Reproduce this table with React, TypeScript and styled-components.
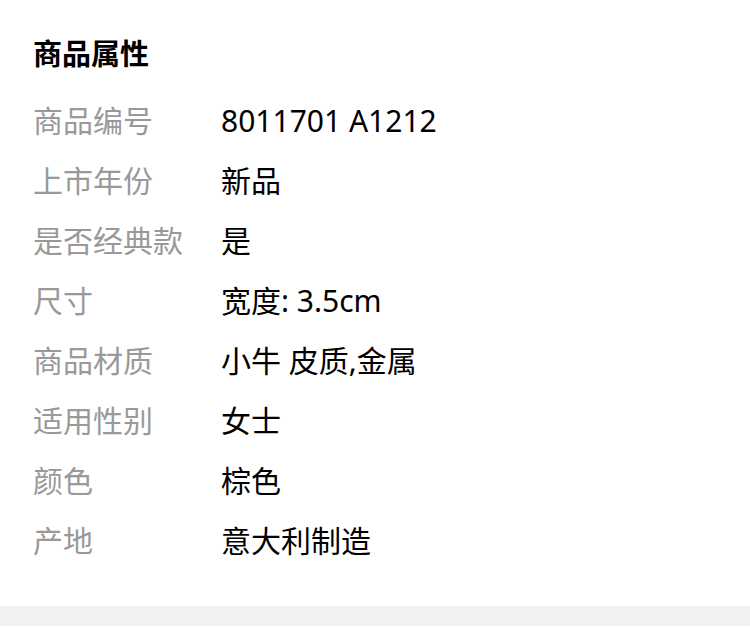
import styled, { createGlobalStyle } from 'styled-components';

const GlobalStyle = createGlobalStyle`
  html, body {
    margin: 0;
    padding: 0;
    background: #ffffff;
  }
  body {
    font-family: "Noto Sans", "Noto Sans CJK SC", sans-serif;
  }
`;

const attributes = [
  { label: '商品编号', value: '8011701 A1212' },
  { label: '上市年份', value: '新品' },
  { label: '是否经典款', value: '是' },
  { label: '尺寸', value: '宽度: 3.5cm' },
  { label: '商品材质', value: '小牛 皮质,金属' },
  { label: '适用性别', value: '女士' },
  { label: '颜色', value: '棕色' },
  { label: '产地', value: '意大利制造' },
];

const App = () => {
  return (
    <>
      <GlobalStyle />
      <Section>
        <Title>商品属性</Title>
        <List>
          {attributes.map((item, index) => (
            <Row key={index}>
              <Label>{item.label}</Label>
              <Value>{item.value}</Value>
            </Row>
          ))}
        </List>
      </Section>
      <Divider />
    </>
  );
};

const Section = styled.section`
  padding: 34px 33px 35px;
  background: #ffffff;
`;

const Title = styled.h2`
  margin: 0 0 17px;
  font-size: 29px;
  line-height: 40px;
  font-weight: 700;
  color: #000000;
`;

const List = styled.div`
  display: flex;
  flex-direction: column;
`;

const Row = styled.div`
  display: grid;
  grid-template-columns: 188px 1fr;
  align-items: center;
  height: 60px;
`;

const Label = styled.span`
  font-size: 30px;
  line-height: 40px;
  color: #999999;
`;

const Value = styled.span`
  font-size: 30px;
  line-height: 40px;
  color: #000000;
`;

const Divider = styled.div`
  height: 20px;
  background: #f2f2f2;
`;

export default App;
